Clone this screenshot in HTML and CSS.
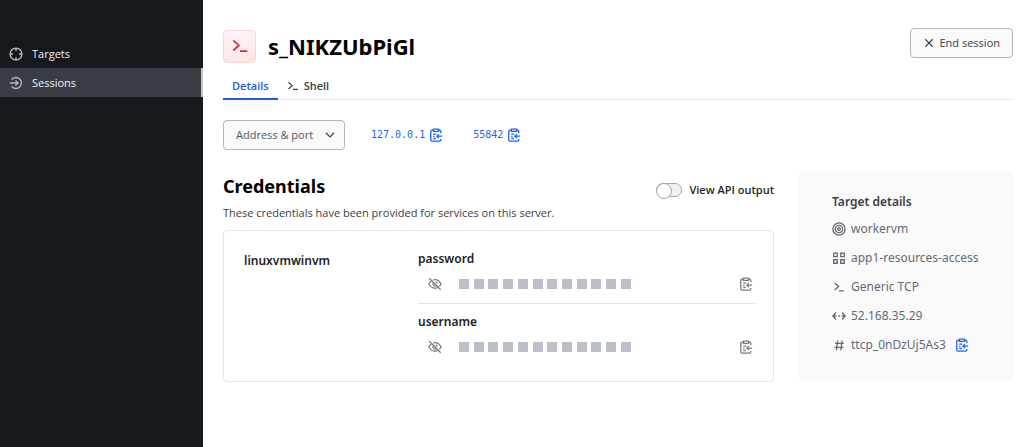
FILE: index.html
```html
<!DOCTYPE html>
<html lang="en">
<head>
    <meta charset="UTF-8">
    <meta name="viewport" content="width=device-width, initial-scale=1.0">
    <title>Sessions - s_NIKZUbPiGl</title>
    <link rel="stylesheet" href="styles.css">
</head>
<body>
    <svg class="sprite" aria-hidden="true">
        <symbol id="terminal" viewBox="0 0 16 16">
            <path d="M2 3l5 4.500L2 12M8 12.500h6.500"/>
        </symbol>
        <symbol id="copy" viewBox="0 0 16 16">
            <path d="M5 2.500H3.500a1.500 1.500 0 0 0-1.500 1.500v9.500A1.500 1.500 0 0 0 3.500 15h8.500a1.500 1.500 0 0 0 1.500-1.500v-1M11 2.500h1A1.500 1.500 0 0 1 13.500 4v2M5 1.200h6v2.600H5zM4.800 7h3.500M4.800 9.500h1.500M4.800 12h3M15 9.300H9M11.300 7L9 9.300l2.300 2.300"/>
        </symbol>
        <symbol id="eye-off" viewBox="0 0 16 16">
            <path d="M1.500 1.500l13 13M6 3.300c4.300-1 7.500 1.700 9 4.700-.5 1-1.200 1.900-2 2.700M3.800 4.200C2.600 5.100 1.700 6.400 1 8c1.500 3 5.500 6.400 10.300 4M6.300 6.300a2.500 2.500 0 0 0 3.500 3.500M8.800 5.600a2.500 2.500 0 0 1 1.700 1.800"/>
        </symbol>
    </svg>

    <div class="layout">
        <nav class="sidebar">
            <a class="nav-item" href="#">
                <svg class="icon" viewBox="0 0 16 16"><circle cx="8" cy="8" r="6.800"/><path d="M8 1v3.500M8 11.500V15M1 8h3.500M11.500 8H15"/></svg>
                Targets
            </a>
            <a class="nav-item active" href="#">
                <svg class="icon" viewBox="0 0 16 16"><path d="M3 4a6.300 6.300 0 1 1 0 8M1 8h9M7.300 5L10.300 8l-3 3"/></svg>
                Sessions
            </a>
        </nav>

        <main class="main">
            <header class="header">
                <div class="session-icon"><svg><use href="#terminal"/></svg></div>
                <h1>s_NIKZUbPiGl</h1>
                <button type="button" class="btn">
                    <svg viewBox="0 0 16 16"><path d="M3 3l10 10M13 3L3 13"/></svg>
                    End session
                </button>
            </header>

            <nav class="tabs">
                <a class="tab active" href="#">Details</a>
                <a class="tab" href="#"><svg><use href="#terminal"/></svg>Shell</a>
            </nav>

            <div class="address">
                <div class="select-wrap">
                    <select class="select" aria-label="Address and port">
                        <option>Address &amp; port</option>
                    </select>
                    <svg class="chevron" viewBox="0 0 16 16"><path d="M2.500 5L8 10.500 13.500 5"/></svg>
                </div>
                <button type="button" class="copy-text">127.0.0.1 <svg class="icon"><use href="#copy"/></svg></button>
                <button type="button" class="copy-text">55842 <svg class="icon"><use href="#copy"/></svg></button>
            </div>

            <div class="content">
                <section>
                    <div class="section-header">
                        <div>
                            <h2>Credentials</h2>
                            <p>These credentials have been provided for services on this server.</p>
                        </div>
                        <label class="toggle"><input type="checkbox">View API output</label>
                    </div>

                    <div class="card">
                        <h3>linuxvmwinvm</h3>
                        <div class="secrets">
                            <div class="secret">
                                <h3>password</h3>
                                <div class="secret-row">
                                    <button type="button" class="icon-btn" aria-label="Show password"><svg class="icon"><use href="#eye-off"/></svg></button>
                                    <div class="mask"><i></i><i></i><i></i><i></i><i></i><i></i><i></i><i></i><i></i><i></i><i></i><i></i></div>
                                    <button type="button" class="icon-btn" aria-label="Copy password"><svg class="icon"><use href="#copy"/></svg></button>
                                </div>
                            </div>
                            <div class="secret">
                                <h3>username</h3>
                                <div class="secret-row">
                                    <button type="button" class="icon-btn" aria-label="Show username"><svg class="icon"><use href="#eye-off"/></svg></button>
                                    <div class="mask"><i></i><i></i><i></i><i></i><i></i><i></i><i></i><i></i><i></i><i></i><i></i><i></i></div>
                                    <button type="button" class="icon-btn" aria-label="Copy username"><svg class="icon"><use href="#copy"/></svg></button>
                                </div>
                            </div>
                        </div>
                    </div>
                </section>

                <aside class="target">
                    <h3>Target details</h3>
                    <ul>
                        <li><svg class="icon" viewBox="0 0 16 16"><circle cx="8" cy="8" r="7"/><circle cx="8" cy="8" r="4.200"/><circle cx="8" cy="8" r="1.500"/></svg>workervm</li>
                        <li><svg class="icon" viewBox="0 0 16 16"><path d="M2 2.500h4v4H2zM10 2.500h4v4h-4zM2 10h4v4H2zM10 10h4v4h-4z"/></svg>app1-resources-access</li>
                        <li><svg class="icon" viewBox="0 0 16 16"><path d="M3 3.500L7.500 7.500 3 11.500M8 12.500h5.500"/></svg>Generic TCP</li>
                        <li><svg class="icon" viewBox="0 0 16 16"><path d="M4.500 4L1 8l3.500 4M11.500 4L15 8l-3.500 4M1.500 8H5M7 8h2M11 8h3.500"/></svg>52.168.35.29</li>
                        <li>
                            <svg class="icon" viewBox="0 0 16 16"><path d="M6.500 3L5 14M11.500 3L10 14M3.500 6.200h10M3 10.700h10"/></svg>ttcp_0nDzUj5As3
                            <button type="button" class="icon-btn blue" aria-label="Copy target ID"><svg class="icon"><use href="#copy"/></svg></button>
                        </li>
                    </ul>
                </aside>
            </div>
        </main>
    </div>
</body>
</html>
```

FILE: styles.css
```css
* {
    box-sizing: border-box;
}
body {
    margin: 0;
    font-family: "Open Sans", sans-serif;
    font-size: 11px;
    line-height: 16px;
    color: #1c1f24;
    background: #fff;
}
h1, h2, h3, p, ul {
    margin: 0;
    padding: 0;
}
h1, h2, h3, .target {
    font-family: "Noto Sans", sans-serif;
}
h3 {
    font-size: 12px;
    font-weight: 600;
}
a {
    text-decoration: none;
}
button, select {
    font: inherit;
    cursor: pointer;
}
svg {
    flex: none;
    width: 12px;
    height: 12px;
    fill: none;
    stroke: currentColor;
    stroke-width: 1.5;
}
.icon {
    width: 14px;
    height: 14px;
}
.sprite {
    display: none;
}
.layout {
    display: flex;
    min-height: 100vh;
}

/* sidebar */
.sidebar {
    flex: 0 0 203px;
    padding-top: 39px;
    background: #15181c;
}
.nav-item {
    display: flex;
    align-items: center;
    gap: 9px;
    height: 29px;
    padding-left: 9px;
    color: #f0f1f3;
}
.nav-item .icon {
    color: #b8bbc1;
}
.nav-item.active {
    background: #393c43;
    border-right: 2px solid #c2c5cb;
}

/* header */
.main {
    flex: 1;
    min-width: 0;
    padding: 28px 11px 28px 20px;
}
.header {
    display: flex;
    align-items: center;
    gap: 12px;
    height: 36px;
}
.session-icon {
    display: flex;
    align-items: center;
    justify-content: center;
    width: 33px;
    height: 33px;
    border: 1px solid #f2d8da;
    border-radius: 4px;
    background: linear-gradient(#fdf3f3, #fde5e6);
    color: #c73445;
}
.session-icon svg {
    width: 18px;
    height: 18px;
}
h1 {
    font-size: 22px;
    line-height: 32px;
    font-weight: 700;
    color: #000;
}
.btn {
    display: flex;
    align-items: center;
    gap: 5px;
    height: 30px;
    margin: 0 0 6px auto;
    padding: 0 12px;
    border: 1px solid #b4b6ba;
    border-radius: 4px;
    background: #fafafa;
    color: #3b3d45;
}
.tabs {
    display: flex;
    margin-top: 10px;
    border-bottom: 1px solid #e3e4e7;
}
.tab {
    display: flex;
    align-items: center;
    gap: 5px;
    height: 26px;
    margin-bottom: -1px;
    padding: 0 9px;
    border-bottom: 2px solid transparent;
    font-weight: 600;
    color: #3b3d45;
}
.tab.active {
    color: #1c5ae0;
    border-color: #1c5ae0;
}

/* address */
.address {
    display: flex;
    align-items: center;
    gap: 26px;
    margin-top: 20px;
}
.select-wrap {
    position: relative;
}
.select {
    display: block;
    height: 30px;
    width: 122px;
    padding: 0 12px;
    appearance: none;
    border: 1px solid #b4b6ba;
    border-radius: 4px;
    background: #fafafa;
    color: #55575e;
}
.chevron {
    position: absolute;
    top: 9px;
    right: 9px;
    color: #3b3d45;
    pointer-events: none;
}
.copy-text {
    display: flex;
    align-items: center;
    gap: 4px;
    padding: 0;
    margin-right: 4px;
    border: 0;
    background: none;
    color: #1c63f2;
    font-family: "DejaVu Sans Mono", monospace;
    font-size: 10px;
}

/* credentials */
.content {
    display: grid;
    grid-template-columns: 1fr 214px;
    align-items: start;
    gap: 25px;
    margin-top: 22px;
}
.section-header {
    display: flex;
    justify-content: space-between;
    align-items: flex-start;
}
h2 {
    font-size: 18px;
    line-height: 28px;
    font-weight: 700;
    color: #000;
}
.section-header p {
    margin-top: 5px;
    color: #3b3d45;
}
.toggle {
    display: flex;
    align-items: center;
    gap: 7px;
    margin-top: 10px;
    font-weight: 600;
}
.toggle input {
    appearance: none;
    width: 26px;
    height: 14px;
    margin: 0;
    border: 1px solid #a4a6ac;
    border-radius: 7px;
    background: #f1f2f3;
    cursor: pointer;
}
.toggle input::before {
    content: "";
    display: block;
    width: 14px;
    height: 14px;
    margin: -1px;
    border: 1px solid #a4a6ac;
    border-radius: 50%;
    background: #fff;
}
.toggle input:checked {
    background: #1c63f2;
}
.toggle input:checked::before {
    margin-left: 11px;
}
.card {
    display: grid;
    grid-template-columns: 174px 1fr;
    margin-top: 9px;
    padding: 20px 17px 17px 20px;
    border: 1px solid #e3e4e7;
    border-radius: 4px;
}
.card > h3 {
    margin-top: 2px;
}
.secret + .secret {
    margin-top: 2px;
    padding-top: 10px;
    border-top: 1px solid #e3e4e7;
}
.secret-row {
    display: flex;
    align-items: center;
    height: 34px;
    padding: 0 3px 0 10px;
}
.icon-btn {
    display: flex;
    padding: 0;
    border: 0;
    background: none;
    color: #7b7e86;
}
.mask {
    display: flex;
    justify-content: space-between;
    width: 172px;
    margin: 0 auto 0 17px;
}
.mask i {
    width: 10px;
    height: 10px;
    background: #bbbfc8;
}

/* target details */
.target {
    padding: 22px 33px 21px;
    border-radius: 4px;
    background: #fafafa;
}
.target h3 {
    color: #3b3d45;
}
.target ul {
    margin-top: 4px;
    list-style: none;
}
.target li {
    display: flex;
    align-items: center;
    gap: 5px;
    height: 29px;
    font-size: 12px;
    color: #656a76;
    white-space: nowrap;
}
.icon-btn.blue {
    margin-left: 4px;
    color: #1c63f2;
}
```
